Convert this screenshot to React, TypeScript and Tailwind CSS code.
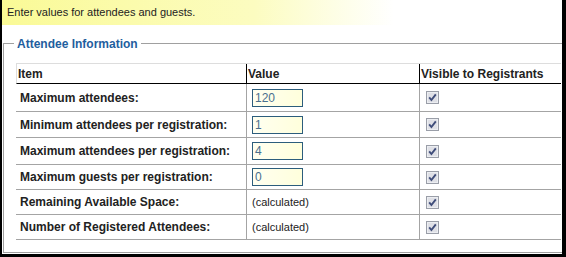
import React from "react";

type Row = {
  label: string;
  value?: string;
  height: string;
};

const rows: Row[] = [
  { label: "Maximum attendees:", value: "120", height: "h-[28px]" },
  { label: "Minimum attendees per registration:", value: "1", height: "h-[26px]" },
  { label: "Maximum attendees per registration:", value: "4", height: "h-[27px]" },
  { label: "Maximum guests per registration:", value: "0", height: "h-[25px]" },
  { label: "Remaining Available Space:", height: "h-[25px]" },
  { label: "Number of Registered Attendees:", height: "h-[25px]" },
];

function DisabledCheck() {
  return (
    <svg width="13" height="13" viewBox="0 0 13 13">
      <rect x="0.5" y="0.5" width="12" height="12" fill="#dfe0e6" stroke="#9a9ea8" />
      <rect x="1.5" y="1.5" width="10" height="10" fill="none" stroke="#eceef2" />
      <path d="M3.2 6.4 L5.4 9 L9.8 3.4" fill="none" stroke="#3f4d7a" strokeWidth="1.9" />
    </svg>
  );
}

export default function App() {
  return (
    <div className="h-[257px] w-[566px] bg-black pb-[3px] pl-[2px] pr-[4px] font-['Liberation_Sans',Arial,sans-serif] text-[12px] text-[#222]">
      <div className="flex h-full flex-col overflow-hidden bg-white">
        <div className="flex h-[25px] shrink-0 items-center bg-linear-to-r from-[#fafa96] via-[#fcfcc0] via-45% to-white to-70% pl-[5px] text-[11px]">
          Enter values for attendees and guests.
        </div>

        {/* attendee info group */}
        <section className="ml-[1px] mt-[18px] border-b border-l border-[#a0a0a0] pb-[12px] pl-[12px]">
          <div className="-ml-[12px] -mt-[9px] flex h-[19px] items-center">
            <div className="h-px w-[10px] bg-[#a0a0a0]" />
            <span className="px-[3px] text-[12px] font-bold text-[#1f5e9e]">
              Attendee Information
            </span>
            <div className="h-px flex-1 bg-[#a0a0a0]" />
          </div>

          <div className="mt-[10px] w-[545px]">
            <div className="flex h-[21px] border-b border-l border-t border-b-black border-l-[#dddddd] border-t-[#dddddd] font-bold">
              <div className="flex w-[229px] items-center pl-[1px]">Item</div>
              <div className="flex w-[173px] items-center border-l border-black pl-[1px]">
                Value
              </div>
              <div className="flex flex-1 items-center border-l border-black pl-[1px]">
                Visible to Registrants
              </div>
            </div>

            {rows.map((row) => (
              <div
                key={row.label}
                className={`flex ${row.height} border-b border-[#a4a4a4]`}
              >
                <div className="flex w-[230px] items-center pl-[4px] font-bold">
                  {row.label}
                </div>
                <div className="flex w-[173px] items-center border-l border-[#a4a4a4] pl-[5px]">
                  {row.value !== undefined ? (
                    <div className="flex h-[18px] w-[51px] items-center border border-[#2c5d7c] bg-linear-to-r from-[#fffff0] to-[#ffffdc] pl-[2px] text-[#4a6f8f]">
                      {row.value}
                    </div>
                  ) : (
                    <span className="text-[11px]">(calculated)</span>
                  )}
                </div>
                <div className="flex flex-1 items-center border-l border-[#a4a4a4] pl-[6px]">
                  <DisabledCheck />
                </div>
              </div>
            ))}
          </div>
        </section>
      </div>
    </div>
  );
}
